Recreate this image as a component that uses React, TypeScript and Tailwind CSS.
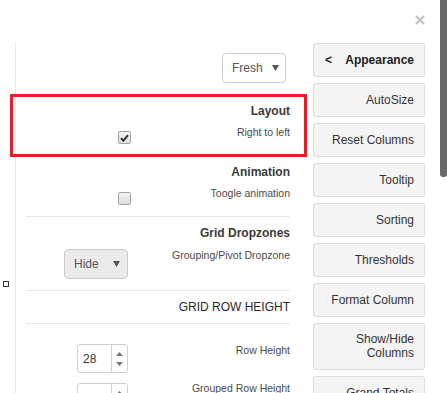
import type { ReactNode } from "react";

const menuItems = [
  "AutoSize",
  "Reset Columns",
  "Tooltip",
  "Sorting",
  "Thresholds",
  "Format Column",
  "Show/Hide Columns",
  "Grand Totals",
];

function Caret() {
  return (
    <svg width="7" height="6" viewBox="0 0 7 6" className="shrink-0">
      <path d="M0 0 H7 L3.5 6 Z" fill="#555" />
    </svg>
  );
}

function Checkbox({ checked }: { checked?: boolean }) {
  return (
    <div className="w-[13px] h-[13px] rounded-[2px] border border-[#a3a3a3] bg-gradient-to-b from-[#f4f4f4] to-[#dedede] flex items-center justify-center">
      {checked && (
        <svg width="9" height="8" viewBox="0 0 9 8">
          <path d="M1 4.2 L3.4 6.6 L8 1.2" stroke="#333" strokeWidth="2" fill="none" />
        </svg>
      )}
    </div>
  );
}

function Spinner({ value }: { value: string }) {
  return (
    <div className="w-[51px] h-[29px] rounded-[3px] border border-[#cfcfcf] bg-white flex">
      <div className="flex-1 flex items-center pl-[5px] text-[12px] text-[#333]">{value}</div>
      <div className="w-[16px] border-l border-[#cfcfcf] flex flex-col items-center justify-center gap-[6px]">
        <svg width="7" height="4" viewBox="0 0 7 4">
          <path d="M0 4 H7 L3.5 0 Z" fill="#777" />
        </svg>
        <svg width="7" height="4" viewBox="0 0 7 4">
          <path d="M0 0 H7 L3.5 4 Z" fill="#777" />
        </svg>
      </div>
    </div>
  );
}

// one setting: control on the left column, label right aligned
function Row({ label, control, controlTop, className }: { label: string; control: ReactNode; controlTop: string; className: string }) {
  return (
    <div className={`flex ${className}`}>
      <div className={`w-[105px] flex justify-end ${controlTop}`}>{control}</div>
      <div className="flex-1 text-right text-[10.5px] leading-[14px] text-[#4a4a4a]">{label}</div>
    </div>
  );
}

function Title({ children, className }: { children: ReactNode; className: string }) {
  return <div className={`text-right text-[12px] leading-[16px] font-bold text-[#3a3a3a] ${className}`}>{children}</div>;
}

export default function App() {
  return (
    <div className="relative w-[447px] h-[393px] overflow-hidden bg-white font-['Liberation_Sans',Arial,sans-serif]">
      {/* close */}
      <svg className="absolute left-[415px] top-[15px]" width="10" height="10" viewBox="0 0 10 10">
        <path d="M1 1 L9 9 M9 1 L1 9" stroke="#c4c4c4" strokeWidth="2.4" />
      </svg>

      {/* scrollbar thumb */}
      <div className="absolute right-0 top-0 w-[7px] h-[177px] rounded-b-[3px] bg-[#686868]" />

      <div className="flex pt-[43px]">
        <div className="w-[15px] shrink-0">
          <div className="mt-[238px] ml-[3px] w-[6px] h-[6px] border-[1.5px] border-[#333]" />
        </div>

        {/* settings panel */}
        <div className="w-[291px] shrink-0 h-[350px] border-l border-[#e6e6e6] pl-[10px] pr-[16px]">
          <div className="mt-[10px] flex justify-end pr-[4px]">
            <div className="w-[64px] h-[30px] rounded-[4px] border border-[#cccccc] bg-white flex items-center justify-between pl-[9px] pr-[6px] text-[12px] text-[#555]">
              <span>Fresh</span>
              <Caret />
            </div>
          </div>

          <Title className="mt-[20px]">Layout</Title>
          <Row className="mt-[6px]" controlTop="pt-[6px]" label="Right to left" control={<Checkbox checked />} />

          <Title className="mt-[20px]">Animation</Title>
          <Row className="mt-[6px]" controlTop="pt-[6px]" label="Toogle animation" control={<Checkbox />} />

          <div className="mt-[11px] h-px bg-[#e8e8e8]" />

          <Title className="mt-[8px]">Grid Dropzones</Title>
          <Row
            className="mt-[7px]"
            controlTop="pt-[1px] pr-[3px]"
            label="Grouping/Pivot Dropzone"
            control={
              <div className="w-[64px] h-[30px] rounded-[4px] border border-[#cccccc] bg-[#ebebeb] flex items-center justify-between pl-[9px] pr-[7px] text-[12px] text-[#555]">
                <span>Hide</span>
                <Caret />
              </div>
            }
          />

          <div className="mt-[11px] h-px bg-[#e8e8e8]" />
          <div className="mt-[8px] text-right text-[12px] leading-[16px] text-[#2a2a2a]">GRID ROW HEIGHT</div>
          <div className="mt-[8px] h-px bg-[#e8e8e8]" />

          <Row className="mt-[19px]" controlTop="pt-[1px] pr-[3px]" label="Row Height" control={<Spinner value="28" />} />
          <Row className="mt-[8px]" controlTop="pt-[2px] pr-[3px]" label="Grouped Row Height" control={<Spinner value="" />} />
        </div>

        {/* menu */}
        <div className="ml-[7px] w-[112px] shrink-0 flex flex-col gap-[6px]">
          <div className="rounded-[3px] border border-[#dcdcdc] bg-[#f4f4f4] py-[9px] pl-[11px] pr-[10px] flex justify-between text-[12px] leading-[14px] font-bold text-[#222]">
            <span>&lt;</span>
            <span>Appearance</span>
          </div>
          {menuItems.map((item) =>
            item === "Show/Hide Columns" ? (
              <div
                key={item}
                className="rounded-[3px] border border-[#dcdcdc] bg-[#f4f4f4] py-[9px] pl-[6px] pr-[10px] text-right text-[12px] leading-[13.5px] text-[#333]"
              >
                Show/Hide
                <br />
                Columns
              </div>
            ) : (
              <div
                key={item}
                className="rounded-[3px] border border-[#dcdcdc] bg-[#f4f4f4] py-[9px] pl-[6px] pr-[10px] text-right text-[12px] leading-[14px] text-[#333]"
              >
                {item}
              </div>
            )
          )}
        </div>
      </div>

      {/* highlight */}
      <div className="absolute left-[10px] top-[94px] w-[297px] h-[63px] border-[3px] border-[#ec1c24]" />
    </div>
  );
}
